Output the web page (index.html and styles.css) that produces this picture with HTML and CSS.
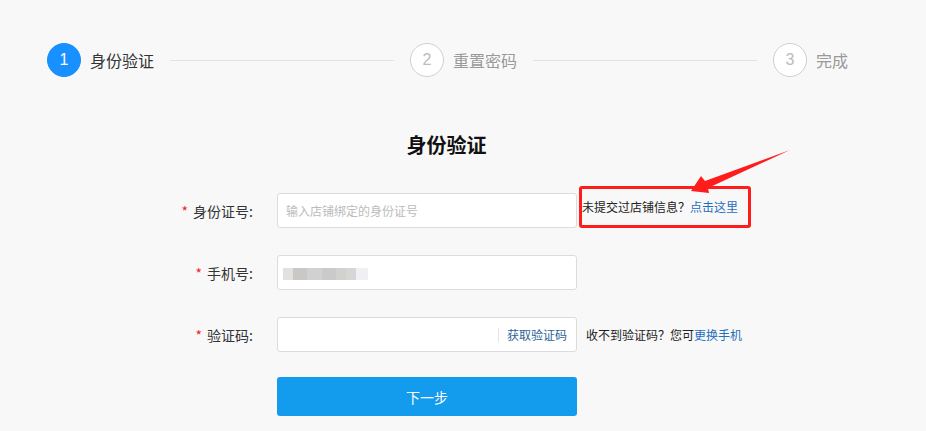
FILE: index.html
```html
<!DOCTYPE html>
<html lang="zh-CN">
<head>
  <meta charset="UTF-8" />
  <meta name="viewport" content="width=device-width, initial-scale=1.0"/>
  <title>找回密码 - 身份验证</title>
  <link rel="stylesheet" href="styles.css">
</head>
<body>
  <div class="page">
    <div class="steps">
      <div class="step active">
        <span class="step-num">1</span>
        <span class="step-text">身份验证</span>
      </div>
      <div class="step-line"></div>
      <div class="step">
        <span class="step-num">2</span>
        <span class="step-text">重置密码</span>
      </div>
      <div class="step-line"></div>
      <div class="step">
        <span class="step-num">3</span>
        <span class="step-text">完成</span>
      </div>
    </div>

    <div class="panel">
      <h2 class="panel-title">身份验证</h2>

      <form class="form">
        <label class="form-label"><i>*</i>身份证号:</label>
        <div class="field">
          <input type="text" placeholder="输入店铺绑定的身份证号" />
        </div>
        <div class="hint hint-marked">未提交过店铺信息？<a href="#">点击这里</a></div>

        <label class="form-label"><i>*</i>手机号:</label>
        <div class="field">
          <div class="masked"></div>
        </div>
        <div></div>

        <label class="form-label"><i>*</i>验证码:</label>
        <div class="field field-code">
          <input type="text" />
          <a href="#" class="get-code">获取验证码</a>
        </div>
        <div class="hint">收不到验证码？您可<a href="#">更换手机</a></div>

        <div></div>
        <button type="button" class="btn-next">下一步</button>
        <div></div>
      </form>
    </div>
  </div>

  <!-- annotation arrow -->
  <svg class="arrow" width="926" height="431" viewBox="0 0 926 431">
    <polygon points="691,191 701,176 705,181 790,150 708,188 709,193" fill="#ff1c1c"/>
  </svg>
</body>
</html>
```

FILE: styles.css
```css
* {
  box-sizing: border-box;
}

body {
  margin: 0;
  background: #f8f8f8;
  font-family: "Noto Sans CJK SC", "Liberation Sans", sans-serif;
  color: #333;
  height: 431px;
  overflow: hidden;
}

.page {
  padding: 43px 78px 0 47px;
}

.steps {
  display: flex;
  align-items: center;
}

.step {
  display: flex;
  align-items: center;
  gap: 9px;
}

.step-num {
  width: 34px;
  height: 34px;
  border-radius: 50%;
  border: 1px solid #cfcfcf;
  background: #fff;
  color: #bbb;
  font-family: "Liberation Sans", sans-serif;
  font-size: 16px;
  display: flex;
  align-items: center;
  justify-content: center;
}

.step-text {
  font-size: 16px;
  color: #999;
}

.step.active .step-num {
  background: #1890ff;
  border-color: #1890ff;
  color: #fff;
}

.step.active .step-text {
  color: #333;
}

.step-line {
  flex: 1;
  height: 1px;
  background: #e3e3e3;
  margin: 0 16px;
}

.panel {
  width: 553px;
  margin: 0 0 0 123px;
}

.panel-title {
  margin: 54px 0 0;
  font-size: 20px;
  line-height: 28px;
  text-align: center;
  font-weight: bold;
  color: #111;
}

.form {
  display: grid;
  grid-template-columns: 107px 300px 1fr;
  grid-auto-rows: 35px;
  row-gap: 27px;
  align-items: center;
  margin-top: 34px;
}

.form-label {
  font-size: 14px;
  color: #333;
  text-align: right;
  padding-right: 24px;
}

.form-label i {
  font-style: normal;
  color: #f5222d;
  margin-right: 5px;
}

.field {
  height: 35px;
  background: #fff;
  border: 1px solid #dcdcdc;
  border-radius: 3px;
  display: flex;
  align-items: center;
}

.field input {
  flex: 1;
  height: 100%;
  border: none;
  outline: none;
  background: transparent;
  padding: 0 8px;
  font-family: inherit;
  font-size: 12px;
  min-width: 0;
}

.field input::placeholder {
  color: #bbb;
}

.masked {
  width: 85px;
  height: 12px;
  margin: 3px 0 0 5px;
  background: linear-gradient(90deg, #e2e1de 0 12%, #c9c8c6 12% 28%, #cfd1d3 28% 46%, #cbcacb 46% 62%, #d3d1cd 62% 74%, #d6d6d6 74% 86%, #eef0f3 86% 100%);
  filter: blur(0.6px);
}

.field-code .get-code {
  font-size: 12px;
  color: #2d5f99;
  text-decoration: none;
  padding: 0 9px 0 8px;
  border-left: 1px solid #e5e5e5;
  line-height: 14px;
}

.hint {
  font-size: 12px;
  color: #222;
  margin-left: 9px;
  white-space: nowrap;
}

.hint a {
  color: #1f6fbf;
  text-decoration: none;
}

.hint-marked {
  justify-self: start;
  margin: -11px 0 -3px 2px;
  height: 42px;
  padding: 0 10px 0 0;
  border: 3px solid #ff1c1c;
  border-radius: 3px;
  display: flex;
  align-items: center;
}

.btn-next {
  height: 39px;
  border: none;
  border-radius: 3px;
  background: #139bee;
  color: #fff;
  font-family: inherit;
  font-size: 14px;
  cursor: pointer;
}

.arrow {
  position: absolute;
  left: 0;
  top: 0;
  pointer-events: none;
}
```
